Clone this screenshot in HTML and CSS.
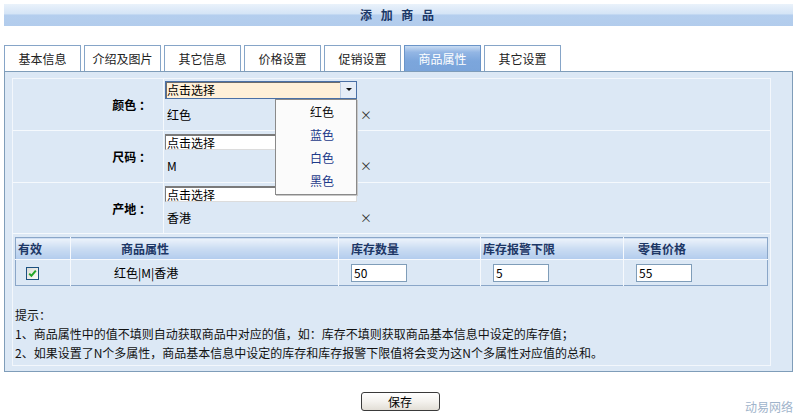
FILE: index.html
```html
<!DOCTYPE html>
<html lang="zh-CN">
<head>
<meta charset="utf-8">
<title>添加商品</title>
<link rel="stylesheet" href="styles.css">
</head>
<body>
<div class="page">
  <div class="titlebar">添 加 商 品</div>

  <ul class="tabs">
    <li class="tab">基本信息</li>
    <li class="tab">介绍及图片</li>
    <li class="tab">其它信息</li>
    <li class="tab">价格设置</li>
    <li class="tab">促销设置</li>
    <li class="tab active">商品属性</li>
    <li class="tab">其它设置</li>
  </ul>

  <div class="panel">
    <div class="inner">
      <div class="attr-form">
        <div class="attr-row">
          <div class="attr-label">颜色 ：</div>
          <div class="attr-field">
            <div class="combo">
              <div class="combo-box"><span class="combo-text">点击选择</span><span class="combo-arrow"></span></div>
              <ul class="combo-list">
                <li class="combo-item first">红色</li>
                <li class="combo-item">蓝色</li>
                <li class="combo-item">白色</li>
                <li class="combo-item">黑色</li>
              </ul>
            </div>
            <div class="chosen"><span class="chosen-text">红色</span><span class="remove">×</span></div>
          </div>
        </div>
        <div class="attr-row">
          <div class="attr-label">尺码 ：</div>
          <div class="attr-field">
            <div class="text-box">点击选择</div>
            <div class="chosen"><span class="chosen-text">M</span><span class="remove">×</span></div>
          </div>
        </div>
        <div class="attr-row">
          <div class="attr-label">产地 ：</div>
          <div class="attr-field">
            <div class="text-box">点击选择</div>
            <div class="chosen"><span class="chosen-text">香港</span><span class="remove">×</span></div>
          </div>
        </div>
      </div>

      <table class="sku">
        <colgroup>
          <col class="c-valid"><col class="c-name"><col class="c-stock"><col class="c-alarm"><col class="c-price">
        </colgroup>
        <thead>
          <tr>
            <th class="h-valid">有效</th>
            <th class="h-name">商品属性</th>
            <th class="h-stock">库存数量</th>
            <th class="h-alarm">库存报警下限</th>
            <th class="h-price">零售价格</th>
          </tr>
        </thead>
        <tbody>
          <tr>
            <td class="d-valid"><span class="check"><svg width="9" height="9" viewBox="0 0 9 9"><path d="M1.2 4.6 L3.4 6.8 L7.8 1.6" fill="none" stroke="#22a626" stroke-width="2"/></svg></span></td>
            <td class="d-name">红色|M|香港</td>
            <td class="d-num"><span class="num-box">50</span></td>
            <td class="d-num"><span class="num-box">5</span></td>
            <td class="d-num"><span class="num-box">55</span></td>
          </tr>
        </tbody>
      </table>

      <div class="tips">
        <p>提示：</p>
        <p>1、商品属性中的值不填则自动获取商品中对应的值，如：库存不填则获取商品基本信息中设定的库存值；</p>
        <p>2、如果设置了N个多属性，商品基本信息中设定的库存和库存报警下限值将会变为这N个多属性对应值的总和。</p>
      </div>
    </div>
  </div>

  <div class="footer">
    <span></span>
    <button class="save" type="button">保存</button>
    <span class="brand">动易网络</span>
  </div>
</div>
</body>
</html>
```

FILE: styles.css
```css
* { box-sizing: border-box; }

body {
  margin: 0;
  background: #fff;
  font-family: "Noto Sans CJK SC", "Liberation Sans", sans-serif;
  font-size: 12px;
  color: #000;
}

.page {
  padding: 4px 4px 0 4px;
}

/* page title strip */
.titlebar {
  height: 22px;
  line-height: 22px;
  text-align: center;
  font-weight: bold;
  font-size: 12px;
  letter-spacing: 3px;
  color: #1b3766;
  background: linear-gradient(#eaf2fb 0, #d4e4f6 45%, #b4ceee 50%, #b2ccec 100%);
}

/* tab strip */
.tabs {
  list-style: none;
  margin: 19px 0 0 0;
  padding: 0;
  display: flex;
  gap: 3px;
}

.tab {
  width: 77px;
  height: 26px;
  line-height: 25px;
  text-align: center;
  color: #222;
  background: #fff;
  border: 1px solid #86a5c8;
  border-bottom: none;
}

.tab.active {
  color: #fff;
  border-color: #6a94c8;
  background: linear-gradient(#c9dcf2 0, #93b6e4 25%, #7ca6dc 60%, #7aa4da 100%);
}

/* main panel */
.panel {
  border: 1px solid #7f9db9;
  background: #dce8f5;
  padding: 6px 21px 5px 7px;
}

.inner {
  border: 1px solid #f3f7fc;
  background: #dce8f5;
}

/* attribute pickers */
.attr-row {
  display: grid;
  grid-template-columns: 151px 1fr;
  height: 52px;
  border-bottom: 1px solid #f5f9fd;
}

.attr-row:last-child {
  height: 51px;
}

.attr-label {
  display: flex;
  align-items: center;
  justify-content: flex-end;
  padding-right: 12px;
  font-weight: bold;
  border-right: 1px solid #f5f9fd;
}

.attr-field {
  padding: 2px 0 0 1px;
}

.combo {
  position: relative;
  width: 192px;
}

.combo-box {
  display: flex;
  height: 18px;
  border: 1px solid #4a70a6;
  background: #fff0d8;
  box-shadow: inset 1px 1px 0 #6c6c6c;
}

.combo-text {
  flex: 1;
  line-height: 15px;
  padding-left: 1px;
}

.combo-arrow {
  width: 16px;
  position: relative;
  background: #e6edf7;
  border-left: 1px solid #bccde4;
}

.combo-arrow::after {
  content: "";
  position: absolute;
  left: 5px;
  top: 6px;
  border-left: 3px solid transparent;
  border-right: 3px solid transparent;
  border-top: 3px solid #111;
}

.combo-list {
  position: absolute;
  z-index: 5;
  left: 110px;
  top: 18px;
  width: 82px;
  margin: 0;
  padding: 0 0 2px 0;
  list-style: none;
  background: #fbfbfb;
  border: 1px solid #8a8a8a;
  box-shadow: 1px 1px 0 #c8c8c8;
}

.combo-item {
  height: 23px;
  line-height: 23px;
  text-align: center;
  padding-left: 12px;
  color: #1d3a8a;
}

.combo-item.first {
  color: #111;
}

.text-box {
  width: 192px;
  height: 16px;
  margin: 1px 0;
  line-height: 14px;
  padding-left: 1px;
  background: #fff;
  border: 1px solid #dcdcdc;
  border-top: 2px solid #7a7a7a;
  border-left: 1px solid #7a7a7a;
}

.chosen {
  display: flex;
  margin-top: 8px;
  height: 16px;
  line-height: 16px;
  padding-left: 2px;
}

.chosen-text {
  width: 193px;
}

.remove {
  color: #333;
}

/* per-combination stock table */
.sku {
  margin: 3px 0 0 2px;
  width: 752px;
  border-collapse: collapse;
  border: 1px solid #8aa6c8;
  table-layout: fixed;
}

.c-valid { width: 55px; }
.c-name { width: 268px; }
.c-stock { width: 142px; }
.c-alarm { width: 143px; }
.c-price { width: 144px; }

.sku th {
  height: 22px;
  padding: 0;
  text-align: left;
  font-weight: bold;
  color: #1d3766;
  background: linear-gradient(#edf3fb 0, #cadcf2 50%, #b2cced 100%);
  border-left: 1px solid #f6f9fd;
  border-bottom: 1px solid #f6f9fd;
}

.sku th:first-child,
.sku td:first-child {
  border-left: none;
}

.h-valid { padding-left: 2px !important; }
.h-name { padding-left: 50px !important; }
.h-stock { padding-left: 12px !important; }
.h-alarm { padding-left: 2px !important; }
.h-price { padding-left: 14px !important; }

.sku td {
  height: 26px;
  padding: 0;
  background: #dce8f5;
  border-left: 1px solid #f6f9fd;
}

.d-valid { padding-left: 10px !important; }
.d-name { padding-left: 43px !important; }
.d-num { padding-left: 12px !important; }

.check {
  display: flex;
  align-items: center;
  justify-content: center;
  width: 13px;
  height: 13px;
  margin-top: 2px;
  border: 1px solid #1c5180;
  background: linear-gradient(135deg, #dcdcd6, #fbfbf9);
}

.num-box {
  display: block;
  width: 56px;
  height: 18px;
  line-height: 16px;
  padding-left: 2px;
  margin-top: 1px;
  background: #fff;
  border: 1px solid #7f9db9;
}

/* hint lines */
.tips {
  margin-top: 19px;
  padding: 0 0 3px 2px;
}

.tips p {
  margin: 0;
  line-height: 19px;
  color: #111;
}

/* bottom bar */
.footer {
  display: grid;
  grid-template-columns: 1fr auto 1fr;
  margin-top: 20px;
  height: 22px;
}

.save {
  width: 79px;
  height: 19px;
  padding: 0;
  font-family: inherit;
  font-size: 12px;
  line-height: 16px;
  color: #000;
  border: 1px solid #3a3a3a;
  border-radius: 3px;
  background: linear-gradient(#ffffff 0, #f4f2ee 50%, #e2ded6 100%);
  margin-left: 3px;
}

.brand {
  justify-self: end;
  align-self: end;
  line-height: 15px;
  color: #9fb4cb;
  font-size: 12px;
}
```
